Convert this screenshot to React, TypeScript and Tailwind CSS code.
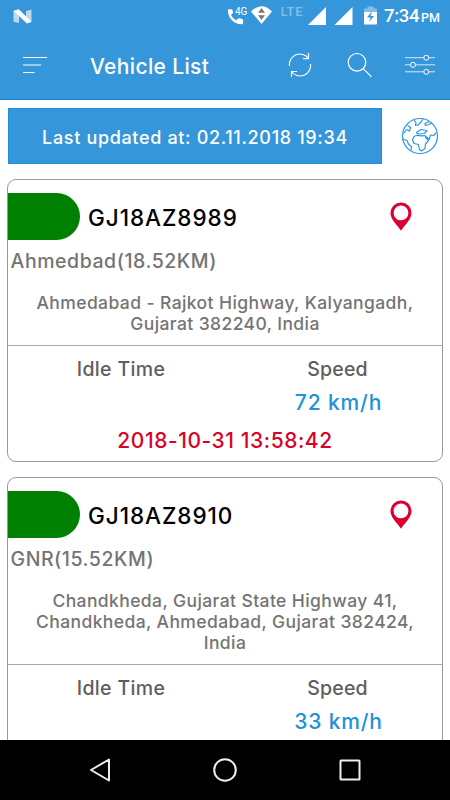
interface Vehicle {
    plate: string
    place: string
    address: string[]
    speed: string
    date?: string
}

const vehicles: Vehicle[] = [
    {
        plate: 'GJ18AZ8989',
        place: 'Ahmedbad(18.52KM)',
        address: ['Ahmedabad - Rajkot Highway, Kalyangadh,', 'Gujarat 382240, India'],
        speed: '72 km/h',
        date: '2018-10-31 13:58:42',
    },
    {
        plate: 'GJ18AZ8910',
        place: 'GNR(15.52KM)',
        address: ['Chandkheda, Gujarat State Highway 41,', 'Chandkheda, Ahmedabad, Gujarat 382424,', 'India'],
        speed: '33 km/h',
    },
]

function StatusBar() {
    return (
        <div className="flex h-8 items-center justify-between pl-[13px] pr-[10px]">
            <svg className="h-[15px] w-[19px]" viewBox="0 0 19 15">
                <path d="M.5 2L6 .5V14L.5 12.8zM13 2l5.5-1.5V13L13 14.2z" fill="#fff" opacity=".65" />
                <path d="M.5 2L5.8.3 18.5 12.8 14 14.6z" fill="#fff" />
            </svg>
            <div className="flex h-8 items-center">
                <svg className="h-8 w-40" viewBox="0 0 160 32">
                    <path
                        transform="translate(2.4 7.2) scale(.92)"
                        d="M3.2 2.2C2.3 2.2 1.7 2.8 1.7 3.6c0 8.3 6.7 15 15 15 .8 0 1.4-.6 1.4-1.4v-3.1c0-.8-.5-1.3-1.2-1.4-1-.1-2-.3-2.9-.6-.5-.2-1 0-1.4.3l-1.7 1.8C8 12.7 6.3 10.8 5 8.5l1.9-1.8c.4-.4.5-.9.3-1.4-.3-.9-.4-1.4-.5-2-.1-.7-.6-1.1-1.3-1.1z"
                        fill="#fff"
                    />
                    <text x="11" y="15" className="fill-white font-[Roboto] text-[10px]">4G</text>
                    <path d="M27 11.500Q37.500 1 48 11.500L37.500 24z" fill="#fff" />
                    <path d="M37.500 8l3.500 4.700h-7zM37.500 20l3.500-4.700h-7z" fill="#777" />
                    <text x="56.500" y="16" className="fill-[#84bde9] font-[Roboto] text-[13px] font-medium" textLength="22">LTE</text>
                    <path d="M84 25L102 7v18zM110.500 25l18-18v18z" fill="#fff" />
                    <path d="M143.500 6.500h6v2h2.500q1 0 1 1V12h-13V9.500q0-1 1-1h2.500z" fill="#83bee9" />
                    <path d="M140 12h13v11.500q0 1-1 1h-11q-1 0-1-1z" fill="#fff" />
                    <path d="M148 11l-5 6.500h3.500L145 22l5-6h-3.500z" fill="#3696da" />
                </svg>
                <div className="flex items-baseline font-[Roboto] font-medium text-white">
                    <span className="w-[37px] text-[18.5px] leading-8 tracking-[-0.3px]">7:34</span>
                    <span className="text-[12.5px]">PM</span>
                </div>
            </div>
        </div>
    )
}

function Toolbar() {
    return (
        <div className="flex h-[66px] items-center pl-[23px] pr-[15px]">
            <svg className="h-[18px] w-6" viewBox="0 0 24 18" stroke="#fff" strokeWidth="1.1">
                <path d="M0 1.500h24M0 9h18M0 16.500h11.500" />
            </svg>
            <h1 className="ml-[43px] mt-[4px] text-[21px] font-medium leading-8 tracking-[0.36px] text-white">Vehicle List</h1>
            <div className="ml-auto flex items-center">
                <svg className="h-6 w-6" viewBox="0 0 24 24" fill="none" stroke="#fff" strokeWidth="1.2">
                    <path d="M1.500 13A10.500 10.500 0 0 1 20.500 5.500M22.500 11A10.500 10.500 0 0 1 3.500 18.500M20.500 0v5.700h-5.500M3.500 24v-5.500h5.500" />
                </svg>
                <svg className="ml-[35px] h-[26px] w-[26px]" viewBox="0 0 26 26" fill="none" stroke="#fff" strokeWidth="1.2">
                    <circle cx="10" cy="10.300" r="8.800" />
                    <path d="M16.300 16.600L24.500 24.800" />
                </svg>
                <svg className="ml-[32px] h-5 w-[30px]" viewBox="0 0 30 20" fill="#3696da" stroke="#fff" strokeWidth="1">
                    <path d="M0 2.700h30M0 9.800h30M0 16.800h30" opacity=".8" />
                    <circle cx="21.300" cy="2.700" r="2.500" />
                    <circle cx="8" cy="9.800" r="2.500" />
                    <circle cx="21.300" cy="16.800" r="2.500" />
                </svg>
            </div>
        </div>
    )
}

function GlobeIcon() {
    return (
        <svg className="h-[38px] w-[38px]" viewBox="0 0 38 38" fill="none" stroke="#2f96dc" strokeWidth="1.2" strokeLinejoin="round">
            <circle cx="19" cy="19" r="17.500" />
            <path d="M2.500 16.500L5.500 12.500 8.500 14 9.700 10.500 6.500 8.500" />
            <path d="M13 3L15 5.500 14.500 8.500 17 8 20 5 22 2M28.500 4.500L24 6.500 24.500 8.500 28 7.500 30.500 6" />
            <path d="M25.500 13.500L20 12.500 15.500 15.500 17 17 23 16.500 26 14z" />
            <path d="M1.500 22L6 23.500 7.500 27 10.500 30 10 33.500" />
            <path d="M13 19.500L16 18.300 21 18.800 24 18.500 25 21 27.500 23.500 24.500 27 24 31.500 20.500 34 18.500 32.500 17.500 27.500 13 26.500 11.500 22.500z" />
            <path d="M25 19.500L28 22.500 29.500 18 32.500 18.500 35.500 15.500" />
        </svg>
    )
}

function PinIcon() {
    return (
        <svg className="h-[29px] w-[22px]" viewBox="0 0 22 29">
            <path
                fillRule="evenodd"
                fill="#dc0032"
                d="M11 .5A10.500 10.500 0 0 0 .5 11c0 6.500 6 11 10.500 17.800C15.500 22 21.500 17.500 21.500 11A10.500 10.500 0 0 0 11 .5zM11 3.500a7.400 7.400 0 1 1 0 14.800 7.400 7.400 0 0 1 0-14.800z"
            />
        </svg>
    )
}

function VehicleCard({ vehicle }: { vehicle: Vehicle }) {
    return (
        <article className="shrink-0 rounded-[9px] border border-[#999] pt-[13px]">
            <div className="flex h-[47px] items-center">
                <div className="h-full w-[72px] rounded-r-full bg-[#008000]" />
                <h2 className="ml-[8px] mt-[3px] text-[22.5px] font-medium leading-7 tracking-[0.95px] text-black">{vehicle.plate}</h2>
                <div className="mb-px ml-auto mr-[30px]">
                    <PinIcon />
                </div>
            </div>
            <p className="mt-[9px] pl-[2.5px] text-[19.5px] font-medium leading-6 tracking-[0.55px] text-[#747474]">{vehicle.place}</p>
            <div className="mt-[19px] flex flex-col items-center pb-[11px] text-[17.5px] font-medium leading-[21px] tracking-[0.4px] text-[#747474]">
                {vehicle.address.map((line) => (
                    <span key={line} className="whitespace-nowrap">{line}</span>
                ))}
            </div>
            <div className="grid grid-cols-2 border-t border-[#aaa] pt-[11px] text-center font-medium">
                <div className="pl-[9px] text-[19.5px] leading-6 tracking-[0.35px] text-[#5e5e5e]">Idle Time</div>
                <div className="pl-[8px] text-[19.5px] leading-6 tracking-[0.2px] text-[#5e5e5e]">Speed</div>
                <div className="col-start-2 mt-[9px] pl-[10px] text-[21px] leading-[26px] tracking-[0.85px] text-[#2191d8]">{vehicle.speed}</div>
            </div>
            <div className="mb-[7px] mt-3 h-[26px] text-center text-[21px] font-medium leading-[26px] tracking-[0.55px] text-[#d90227]">
                {vehicle.date}
            </div>
        </article>
    )
}

function NavBar() {
    return (
        <nav className="flex h-[60px] shrink-0 items-center justify-between bg-black px-[88px]">
            <svg className="h-6 w-6" viewBox="0 0 24 24" fill="none" stroke="#eee" strokeWidth="2" strokeLinejoin="round">
                <path d="M21 1.500v21L3 12z" />
            </svg>
            <svg className="h-6 w-6" viewBox="0 0 24 24" fill="none" stroke="#eee" strokeWidth="2">
                <circle cx="12" cy="12" r="10.800" />
            </svg>
            <svg className="h-6 w-6" viewBox="0 0 24 24" fill="none" stroke="#eee" strokeWidth="2">
                <rect x="2.500" y="2.500" width="19" height="19" rx=".5" />
            </svg>
        </nav>
    )
}

export default function App() {
    return (
        <div className="flex h-[800px] w-[450px] flex-col overflow-hidden bg-white font-[Inter,sans-serif]">
            <header className="h-[100px] shrink-0 border-b border-[#1686d0] bg-[#3696da]">
                <StatusBar />
                <Toolbar />
            </header>
            <main className="flex min-h-0 flex-1 flex-col overflow-hidden px-[7px] pt-2">
                <div className="flex h-14 shrink-0 items-center pl-px">
                    <div className="flex h-14 w-[374px] items-center justify-center border border-[#1b91dc] bg-[#3696da] pt-[3px] text-[18px] font-medium tracking-[0.66px] text-white">
                        <span className="whitespace-nowrap">Last updated at: 02.11.2018 19:34</span>
                    </div>
                    <div className="ml-[19px]">
                        <GlobeIcon />
                    </div>
                </div>
                <div className="mt-[15px] flex flex-col gap-[15px]">
                    {vehicles.map((vehicle) => (
                        <VehicleCard key={vehicle.plate} vehicle={vehicle} />
                    ))}
                </div>
            </main>
            <NavBar />
        </div>
    )
}
